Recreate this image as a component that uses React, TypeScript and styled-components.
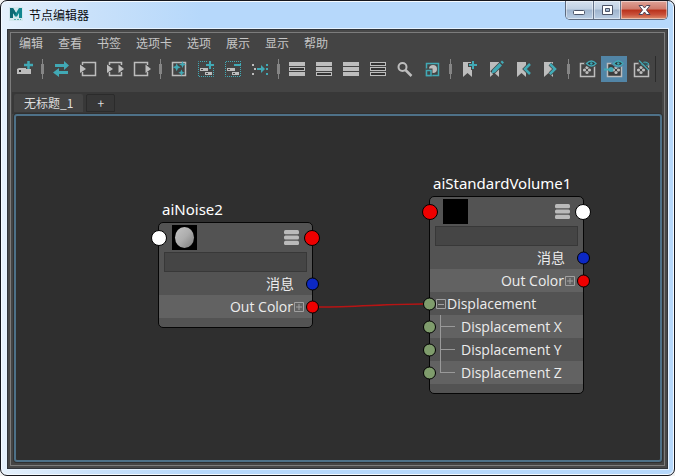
import React from 'react';
import styled, { createGlobalStyle, css } from 'styled-components';

const GlobalStyle = createGlobalStyle`
  *, *::before, *::after { box-sizing: border-box; }
  body { margin: 0; background: #f2f2f2; }
  button, input { font: inherit; color: inherit; margin: 0; padding: 0; border: 0; background: none; }
  svg { display: block; }
`;

const TEAL = '#41a9b5';
const GREY = '#bdbdbd';

const Window = styled.div`
  display: flex;
  flex-direction: column;
  min-height: 100vh;
  padding: 0 6px 6px;
  border: 1px solid #15171e;
  border-radius: 7px;
  background: linear-gradient(90deg, #e6f1fc 0, #c9e1fa 90px, #b6d8fb 200px, #b6d8fb 100%);
  box-shadow: inset 0 0 0 1px #f4faff;
  font-family: 'Noto Sans CJK SC', sans-serif;
  font-size: 12px;
`;

const TitleBar = styled.header`
  display: flex;
  align-items: flex-start;
  height: 28px;
`;

const AppTitle = styled.h1`
  display: flex;
  flex: 1;
  align-items: center;
  gap: 6px;
  height: 26px;
  margin: 0;
  padding-left: 2px;
  font-size: 12px;
  font-weight: 400;
  color: #0c0c10;
`;

const WindowControls = styled.div`
  display: flex;
  height: 19px;
  border: 1px solid #5e6b7f;
  border-top: 0;
  border-radius: 0 0 5px 5px;
  overflow: hidden;
`;

const WindowButton = styled.button<{ $close?: boolean }>`
  display: flex;
  align-items: center;
  justify-content: center;
  width: ${(p) => (p.$close ? 47 : 27)}px;
  background: ${(p) =>
    p.$close
      ? 'linear-gradient(#dfa398 0, #cf7a6b 45%, #b9311b 50%, #c8503a 75%, #dd8d6c 100%)'
      : 'linear-gradient(#d5e1ef 0, #c0d0e3 45%, #9fb4cd 50%, #b9cde4 100%)'};
  box-shadow: inset 0 0 0 1px rgba(255, 255, 255, 0.45);

  & + & {
    border-left: 1px solid #66748a;
  }
`;

const Client = styled.main`
  display: flex;
  flex: 1;
  flex-direction: column;
  padding: 2px;
  border: 1px solid #30343a;
  background: #484848;
  box-shadow: 0 0 0 1px #e6f2fe;
`;

const Panel = styled.div`
  display: flex;
  flex: 1;
  flex-direction: column;
  border: 1px solid #7c7c7c;
  background: #444444;
`;

const MenuBar = styled.nav`
  display: flex;
  gap: 15px;
  height: 20px;
  padding-left: 8px;
`;

const MenuItem = styled.button`
  line-height: 20px;
  color: #c6c6c6;
`;

const Toolbar = styled.div`
  display: flex;
  gap: 1px;
  height: 39px;
  padding-top: 3px;
`;

const ToolButton = styled.button<{ $active?: boolean }>`
  flex: none;
  width: 26px;
  height: 26px;
  background: ${(p) => (p.$active ? '#5285a6' : 'transparent')};
`;

const Separator = styled.span`
  display: flex;
  flex: none;
  align-items: center;
  justify-content: center;
  width: 9px;
  height: 26px;
  background: linear-gradient(#858585, #858585) center / 1px 20px no-repeat;

  &::before {
    content: '';
    width: 3px;
    height: 10px;
    background: #858585;
  }
`;

const ToolbarEnd = styled.span`
  width: 1px;
  height: 26px;
  background: #2c2c2c;
`;

const TabBar = styled.div`
  display: flex;
  gap: 3px;
  height: 22px;
  margin: 0 2px 0 1px;
  padding: 2px 0 2px 2px;
  background: #383838;
`;

const Tab = styled.button<{ $selected?: boolean }>`
  line-height: 18px;
  color: #dddddd;
  border-radius: 2px 2px 0 0;
  ${(p) =>
    p.$selected
      ? css`
          padding: 0 10px;
          background: #444444;
        `
      : css`
          width: 29px;
          background: #373737;
          border: 1px solid #2b2b2b;
          line-height: 16px;
        `}
`;

const Canvas = styled.section`
  position: relative;
  flex: 1;
  min-height: 320px;
  margin: 0 2px 3px 3px;
  border: 2px solid #4e7188;
  border-radius: 3px;
  background: #2f2f2f;
  overflow: hidden;
  box-shadow: 0 0 0 1px #303030;
`;

const Wires = styled.svg`
  position: absolute;
  left: 0;
  top: 0;
  width: 100%;
  height: 100%;
  pointer-events: none;
`;

const NodeItem = styled.article<{ $x: number; $y: number }>`
  position: absolute;
  left: ${(p) => p.$x}px;
  top: ${(p) => p.$y}px;
  width: 155px;
  font-family: 'Open Sans', 'Noto Sans CJK SC', sans-serif;
  font-size: 14px;
  color: #ececec;
`;

const NodeTitle = styled.h2`
  margin: 0 0 3px 4px;
  font-family: 'Noto Sans', sans-serif;
  font-size: 15px;
  font-weight: 400;
  line-height: 20px;
  white-space: nowrap;
  color: #ffffff;
`;

const NodeBody = styled.div`
  padding-bottom: 9px;
  border: 1px solid #060606;
  border-radius: 5px;
  background: #535353;
`;

const NodeHeader = styled.div`
  position: relative;
  display: flex;
  align-items: center;
  justify-content: space-between;
  height: 29px;
  padding: 0 13px;
`;

const Swatch = styled.div`
  width: 25px;
  height: 25px;
  background: #000000;
`;

const NameField = styled.input`
  display: block;
  width: calc(100% - 10px);
  height: 20px;
  margin: 0 5px;
  padding: 0 4px;
  border: 1px solid #383838;
  background: #454545;
`;

const Row = styled.div<{ $light?: boolean; $out?: boolean; $indent?: boolean }>`
  position: relative;
  display: flex;
  align-items: center;
  justify-content: ${(p) => (p.$out ? 'flex-end' : 'flex-start')};
  height: 23px;
  padding-right: ${(p) => (p.$out ? 7 : 0)}px;
  padding-left: ${(p) => (p.$indent ? 10 : 6)}px;
  line-height: 23px;
  white-space: nowrap;
  background: ${(p) => (p.$light ? '#626262' : '#535353')};
`;

const RowLabel = styled.span<{ $pad?: boolean }>`
  margin-right: ${(p) => (p.$pad ? 11 : 1)}px;
`;

const Branch = styled.span<{ $last?: boolean }>`
  width: 15px;
  height: 23px;
  margin-right: 6px;
  background:
    linear-gradient(#999999, #999999) left top / 1px ${(p) => (p.$last ? 12 : 23)}px no-repeat,
    linear-gradient(#999999, #999999) left center / 15px 1px no-repeat;
`;

const Expander = styled.button`
  flex: none;
  width: 10px;
  height: 10px;
  margin-right: 1px;
`;

const Port = styled.button<{ $side: 'left' | 'right'; $color: string; $big?: boolean }>`
  position: absolute;
  top: 50%;
  ${(p) => p.$side}: ${(p) => (p.$big ? -8 : -7)}px;
  width: ${(p) => (p.$big ? 16 : 13)}px;
  height: ${(p) => (p.$big ? 16 : 13)}px;
  transform: translateY(-50%);
  border: 1px solid #000000;
  border-radius: 50%;
  background: ${(p) => p.$color};
`;

const Icon = ({ children }: { children: React.ReactNode }) => (
  <svg width="26" height="26" viewBox="0 0 26 26" fill="none" aria-hidden="true">
    {children}
  </svg>
);

const AddNode = () => (
  <Icon>
    <path d="M6 13l2-1h12v6H6z" fill={GREY} />
    <rect x="8" y="14" width="2" height="2" fill="#333" />
    <path d="M12 7h11v5H12zM15 4h6v9h-6z" fill="#444" />
    <path d="M13 9h9M17.5 5v8" stroke={TEAL} strokeWidth="2.5" />
  </Icon>
);

const Swap = () => (
  <Icon>
    <path d="M7 8h9V5l5 4.5-5 4.5v-3H7zM20 15h-9v-3l-6 4.5 6 4.5v-3h9z" fill={TEAL} />
  </Icon>
);

const Graph = ({ input, output }: { input?: boolean; output?: boolean }) => (
  <Icon>
    {input && output ? (
      <path d="M7.5 9V6.5h12V9M7.5 16v3.5h12V16" stroke={GREY} strokeWidth="1.5" />
    ) : input ? (
      <path d="M7.5 9V6.5h13v13h-13V16" stroke={GREY} strokeWidth="1.5" />
    ) : (
      <path d="M18.5 9V6.5h-13v13h13V16" stroke={GREY} strokeWidth="1.5" />
    )}
    {input && <path d="M5 8.500l6 4.500-6 4z" fill={GREY} />}
    {output && <path d="M16.500 8.500L22 13l-5.500 4z" fill={GREY} />}
  </Icon>
);

const Rearrange = () => (
  <Icon>
    <rect x="6.5" y="6.5" width="13" height="13" stroke={GREY} strokeWidth="1.5" />
    <path
      d="M10.700 7.300l1.200 2.800 2.800 1.200-2.800 1.200-1.200 2.800-1.200-2.800-2.800-1.200 2.800-1.200zM16.500 5l1 2.500 2.500 1-2.500 1-1 2.500-1-2.500-2.500-1 2.500-1zM15.500 13.500l1 2.200 2.200 1-2.200 1-1 2.200-1-2.200-2.200-1 2.200-1z"
      fill={TEAL}
    />
  </Icon>
);

const Selection = ({ add }: { add?: boolean }) => (
  <Icon>
    <path
      d={add ? 'M14 5.500H5.500V20.500H20.500V12' : 'M21 5.500H5.500V20.500H20.500V5'}
      stroke={TEAL}
      strokeDasharray="1 1"
    />
    <path d="M7 12h8v3H7zM12 16h7v3h-7z" fill={GREY} />
    <path d="M8 13h2v1H8zM13 17h2v1h-2z" fill="#444" />
    <path d={add ? 'M13 9h8M17 5v8' : 'M14 9h7'} stroke={TEAL} strokeWidth="2" />
  </Icon>
);

const MatchAttributes = () => (
  <Icon>
    <path d="M5 8h2v2H5zM7 12h2v2H7zM5 17h2v2H5z" fill={GREY} />
    <path d="M10 12h4V9l4 4-4 4v-3h-4zM19 8h2v2h-2zM19 12h2v2h-2zM19 17h2v2h-2z" fill={TEAL} />
  </Icon>
);

const Bars = ({ filled }: { filled: [boolean, boolean, boolean] }) => (
  <Icon>
    {filled.map((on, i) =>
      on ? (
        <rect key={i} x="5" y={6 + i * 5} width="16" height="4" fill={GREY} />
      ) : (
        <rect key={i} x="5.5" y={6.5 + i * 5} width="15" height="3" stroke={GREY} fill="#333" />
      ),
    )}
  </Icon>
);

const Search = () => (
  <Icon>
    <circle cx="10.500" cy="11" r="4" stroke={GREY} strokeWidth="2" />
    <path d="M13.500 14l6 6" stroke={GREY} strokeWidth="2.5" />
  </Icon>
);

const SwatchSize = () => (
  <Icon>
    <rect x="7.5" y="7.5" width="12" height="12" stroke={TEAL} strokeWidth="1.5" />
    <circle cx="14" cy="13" r="4" fill={GREY} />
    <rect x="6.5" y="12.5" width="7" height="7" fill="#444" />
    <rect x="7.5" y="14.5" width="4.5" height="5" stroke={TEAL} strokeWidth="1.5" />
  </Icon>
);

const Bookmark = ({ kind }: { kind: 'add' | 'edit' | 'prev' | 'next' }) => (
  <Icon>
    <path d="M7 6h9v15l-4.500-4L7 21z" fill={GREY} />
    {kind === 'add' && (
      <>
        <path d="M12 9h10M17 4v10" stroke="#444" strokeWidth="4" />
        <path d="M13 9h8M17 5v8" stroke={TEAL} strokeWidth="2" />
      </>
    )}
    {kind === 'edit' && (
      <>
        <path d="M9 17L18 8" stroke="#444" strokeWidth="5" />
        <path d="M8.5 17.5l1-3.500 7-7 2.500 2.500-7 7zM17.500 6l1.500-1.500 2 2L19.500 8z" fill={TEAL} />
      </>
    )}
    {kind === 'prev' && (
      <>
        <path d="M20 8l-5 5 5 5" stroke="#444" strokeWidth="4" />
        <path d="M20 8l-5 5 5 5" stroke={TEAL} strokeWidth="2.5" />
      </>
    )}
    {kind === 'next' && (
      <>
        <path d="M13 8l5 5-5 5" stroke="#444" strokeWidth="4" />
        <path d="M13 8l5 5-5 5" stroke={TEAL} strokeWidth="2.5" />
      </>
    )}
  </Icon>
);

const Visibility = ({ kind }: { kind: 'show' | 'pin' | 'hide' }) => {
  const back = kind === 'pin' ? '#5285a6' : '#444';
  const cx = kind === 'pin' ? 15 : 13;
  return (
    <Icon>
      <rect x="6.5" y="7.5" width="14" height="13" fill={kind === 'pin' ? '#3c3c3c' : 'none'} stroke={GREY} strokeWidth="1.5" />
      {[
        [0, -2.5],
        [-2.5, 0],
        [2.5, 0],
        [0, 2.5],
      ].map(([dx, dy]) => (
        <circle key={`${dx},${dy}`} cx={cx + dx} cy={14 + dy} r="1.600" fill={GREY} />
      ))}
      {kind === 'pin' && (
        <>
          <path d="M3 13.500h6" stroke={TEAL} strokeWidth="2" />
          <circle cx="10" cy="13.500" r="2.500" fill={TEAL} />
        </>
      )}
      {kind === 'hide' ? (
        <>
          <path d="M12 7.500q4.500-4.500 9 0-4.500 5-9 0z" fill="#444" stroke={back} strokeWidth="2.5" />
          <path d="M13 8q4-4 8 0-4 4-8 0z" fill="#34585e" stroke={TEAL} strokeWidth="1" />
          <path d="M11.500 4.500l9 9" stroke="#444" strokeWidth="2.500" />
          <path d="M11 4.500l9.500 9.500" stroke={TEAL} strokeWidth="1.200" />
        </>
      ) : (
        <>
          <path d="M12 7.500q5-5.500 10.500 0-5.500 5.500-10.500 0z" fill="#333" stroke={back} strokeWidth="3" />
          <path d="M12.500 7.500q5-5 9.500 0-4.500 5-9.500 0z" fill="#2b3a3d" stroke={TEAL} strokeWidth="1.3" />
          <circle cx="17.300" cy="7.500" r="1.300" fill={TEAL} />
        </>
      )}
    </Icon>
  );
};

const MayaLogo = () => (
  <svg width="14" height="16" viewBox="0 0 14 16" aria-hidden="true">
    <path d="M0 1h14v14H0z" fill="#d3e8ee" />
    <path d="M1 2h3l3 5 3-5h3v10h-3V7l-2 3.500H6L4 7v5H1z" fill="#12868e" />
    <path d="M1 2h3l3 5-1 2-2-2v5H1z" fill="#0d6a74" />
    <path d="M5 13.500h7" stroke="#59b0b5" strokeDasharray="2 1" />
  </svg>
);

const ListGlyph = () => (
  <svg width="15" height="16" viewBox="0 0 15 16" role="img" aria-label="显示模式">
    <rect y="0" width="15" height="4.2" rx="1.5" fill="#bababa" />
    <rect y="5.400" width="15" height="4.2" rx="1.5" fill="#bababa" />
    <rect y="10.800" width="15" height="4.2" rx="1.5" fill="#bababa" />
  </svg>
);

const Sphere = () => (
  <svg width="25" height="25" viewBox="0 0 25 25" aria-hidden="true">
    <defs>
      <linearGradient id="sphere" x1="0" y1="0" x2="1" y2="1">
        <stop offset="0" stopColor="#c4c4c4" />
        <stop offset=".5" stopColor="#adadad" />
        <stop offset="1" stopColor="#7c7c7c" />
      </linearGradient>
    </defs>
    <ellipse cx="12.500" cy="12.500" rx="9.500" ry="10.500" fill="url(#sphere)" />
  </svg>
);

const Toggle = ({ open, label }: { open?: boolean; label: string }) => (
  <Expander aria-label={label} aria-expanded={!!open}>
    <svg width="10" height="10" viewBox="0 0 10 10" fill="none" stroke="#a0a0a0">
      <path d={open ? 'M.5.5h9v9h-9zM2 5.500h6' : 'M.5.5h9v9h-9zM2 5h6M5 2v6'} />
    </svg>
  </Expander>
);

const menus = ['编辑', '查看', '书签', '选项卡', '选项', '展示', '显示', '帮助'];

type Tool = { label: string; icon: React.ReactNode; active?: boolean };

const toolGroups: Tool[][] = [
  [{ label: '创建节点', icon: <AddNode /> }],
  [
    { label: '同步', icon: <Swap /> },
    { label: '输入连接', icon: <Graph input /> },
    { label: '输入和输出连接', icon: <Graph input output /> },
    { label: '输出连接', icon: <Graph output /> },
  ],
  [
    { label: '重新排列图表', icon: <Rearrange /> },
    { label: '添加选定节点', icon: <Selection add /> },
    { label: '移除选定节点', icon: <Selection /> },
    { label: '属性匹配', icon: <MatchAttributes /> },
  ],
  [
    { label: '简单模式', icon: <Bars filled={[true, false, true]} /> },
    { label: '已连接模式', icon: <Bars filled={[true, true, false]} /> },
    { label: '完全模式', icon: <Bars filled={[true, true, true]} /> },
    { label: '自定义模式', icon: <Bars filled={[false, false, false]} /> },
    { label: '过滤', icon: <Search /> },
    { label: '样例大小', icon: <SwatchSize /> },
  ],
  [
    { label: '添加书签', icon: <Bookmark kind="add" /> },
    { label: '编辑书签', icon: <Bookmark kind="edit" /> },
    { label: '上一个书签', icon: <Bookmark kind="prev" /> },
    { label: '下一个书签', icon: <Bookmark kind="next" /> },
  ],
  [
    { label: '显示形状', icon: <Visibility kind="show" /> },
    { label: '显示连接', icon: <Visibility kind="pin" />, active: true },
    { label: '隐藏节点', icon: <Visibility kind="hide" /> },
  ],
];

type NodeProps = {
  x: number;
  y: number;
  name: string;
  leftColor: string;
  rightColor: string;
  preview?: React.ReactNode;
  children?: React.ReactNode;
};

const GraphNode = ({ x, y, name, leftColor, rightColor, preview, children }: NodeProps) => (
  <NodeItem $x={x} $y={y}>
    <NodeTitle>{name}</NodeTitle>
    <NodeBody>
      <NodeHeader>
        <Port $side="left" $big $color={leftColor} aria-label={`${name} 输入`} />
        <Swatch>{preview}</Swatch>
        <ListGlyph />
        <Port $side="right" $big $color={rightColor} aria-label={`${name} 输出`} />
      </NodeHeader>
      <NameField aria-label={`${name} 过滤`} />
      <Row $out>
        <RowLabel $pad>消息</RowLabel>
        <Port $side="right" $color="#0c28c4" aria-label="消息" />
      </Row>
      <Row $out $light>
        <RowLabel>Out Color</RowLabel>
        <Toggle label="展开 Out Color" />
        <Port $side="right" $color="#ee0000" aria-label="Out Color" />
      </Row>
      {children}
    </NodeBody>
  </NodeItem>
);

const axes = ['X', 'Y', 'Z'];

export default function App() {
  return (
    <>
      <GlobalStyle />
      <Window>
        <TitleBar>
          <AppTitle>
            <MayaLogo />
            节点编辑器
          </AppTitle>
          <WindowControls>
            <WindowButton aria-label="最小化">
              <svg width="13" height="13" viewBox="0 0 13 13">
                <rect x=".5" y="6.5" width="11" height="4" rx="1" fill="#fff" stroke="#4c5468" />
              </svg>
            </WindowButton>
            <WindowButton aria-label="最大化">
              <svg width="13" height="13" viewBox="0 0 13 13">
                <path
                  d="M1.5 1.500h10v9h-10zM4.500 4.500v3h4v-3z"
                  fill="#fff"
                  fillRule="evenodd"
                  stroke="#4c5468"
                />
              </svg>
            </WindowButton>
            <WindowButton $close aria-label="关闭">
              <svg width="13" height="13" viewBox="0 0 13 13">
                <path
                  d="M1 1.500h3.500l2 2.500 2-2.500H12L8.500 6 12 10.500H8.500l-2-2.500-2 2.500H1L4.500 6z"
                  fill="#fff"
                  stroke="#4c4458"
                />
              </svg>
            </WindowButton>
          </WindowControls>
        </TitleBar>
        <Client>
          <Panel>
            <MenuBar>
              {menus.map((m) => (
                <MenuItem key={m}>{m}</MenuItem>
              ))}
            </MenuBar>
            <Toolbar role="toolbar">
              {toolGroups.map((group, i) => (
                <React.Fragment key={i}>
                  {i > 0 && <Separator />}
                  {group.map((t) => (
                    <ToolButton key={t.label} aria-label={t.label} $active={t.active}>
                      {t.icon}
                    </ToolButton>
                  ))}
                </React.Fragment>
              ))}
              <ToolbarEnd />
            </Toolbar>
            <TabBar role="tablist">
              <Tab role="tab" aria-selected $selected>
                无标题_1
              </Tab>
              <Tab aria-label="新建选项卡">+</Tab>
            </TabBar>
            <Canvas>
              <GraphNode
                x={142}
                y={83}
                name="aiNoise2"
                leftColor="#ffffff"
                rightColor="#ee0000"
                preview={<Sphere />}
              />
              <GraphNode x={413} y={57} name="aiStandardVolume1" leftColor="#ee0000" rightColor="#ffffff">
                <Row>
                  <Port $side="left" $color="#7f9c6c" aria-label="Displacement" />
                  <Toggle open label="折叠 Displacement" />
                  <RowLabel>Displacement</RowLabel>
                </Row>
                {axes.map((axis, i) => (
                  <Row key={axis} $indent $light={i % 2 === 0}>
                    <Port $side="left" $color="#7f9c6c" aria-label={`Displacement ${axis}`} />
                    <Branch $last={i === axes.length - 1} />
                    <RowLabel>Displacement {axis}</RowLabel>
                  </Row>
                ))}
              </GraphNode>
              <Wires aria-hidden="true">
                <path d="M303 191C340 191 370 188 407 188" fill="none" stroke="#b81414" strokeWidth="1.5" />
              </Wires>
            </Canvas>
          </Panel>
        </Client>
      </Window>
    </>
  );
}
